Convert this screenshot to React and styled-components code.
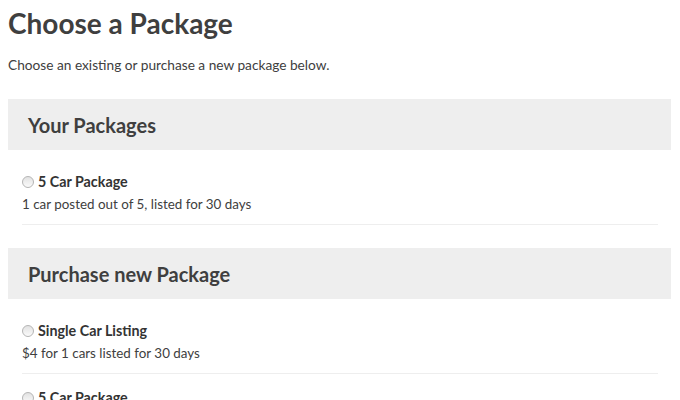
import styled, { createGlobalStyle } from "styled-components";

const GlobalStyle = createGlobalStyle`
  body {
    margin: 8px;
    background: #fff;
    color: #404040;
    font-family: "Lato", "Liberation Sans", sans-serif;
  }
`;

const SECTIONS = [
  {
    title: "Your Packages",
    items: [{ name: "5 Car Package", detail: "1 car posted out of 5, listed for 30 days" }],
  },
  {
    title: "Purchase new Package",
    items: [
      { name: "Single Car Listing", detail: "$4 for 1 cars listed for 30 days" },
      { name: "5 Car Package", detail: "$15 for 5 cars listed for 30 days" },
    ],
  },
];

const App = () => {
  return (
    <Page>
      <GlobalStyle />
      <Title>Choose a Package</Title>
      <Intro>Choose an existing or purchase a new package below.</Intro>
      {SECTIONS.map((section) => (
        <Section key={section.title}>
          <SectionHeader>{section.title}</SectionHeader>
          <List>
            {section.items.map((item) => (
              <Item key={item.name}>
                <Label>
                  <Radio type="radio" name="package" />
                  <Name>{item.name}</Name>
                </Label>
                <Detail>{item.detail}</Detail>
              </Item>
            ))}
          </List>
        </Section>
      ))}
    </Page>
  );
};

const Page = styled.div`
  display: flex;
  flex-direction: column;
`;

const Title = styled.h1`
  margin: 0;
  font-size: 28px;
  line-height: 30px;
  font-weight: 700;
  color: #3f3f3f;
`;

const Intro = styled.p`
  margin: 17px 0 0;
  font-size: 13.7px;
  line-height: 20px;
`;

const Section = styled.section`
  margin-top: 24px;
  & + & {
    margin-top: 23px;
  }
`;

const SectionHeader = styled.h2`
  margin: 0 1px 0 0;
  background: #eeeeee;
  padding: 0 20px;
  height: 51px;
  display: flex;
  align-items: center;
  font-size: 20px;
  font-weight: 700;
  color: #3f3f3f;
`;

const List = styled.div`
  padding: 22px 14px 0;
`;

const Item = styled.div`
  padding-bottom: 10px;
  border-bottom: 1px solid #eeeeee;
  & + & {
    margin-top: 14px;
  }
`;

const Label = styled.label`
  display: flex;
  align-items: center;
  gap: 4px;
  line-height: 20px;
`;

const Radio = styled.input`
  appearance: none;
  margin: 0;
  width: 12px;
  height: 12px;
  border-radius: 50%;
  border: 1px solid #b5b5b5;
  background: linear-gradient(#e2e2e2, #fafafa);
  box-sizing: border-box;
`;

const Name = styled.span`
  font-size: 14.3px;
  font-weight: 700;
  color: #333;
`;

const Detail = styled.div`
  font-size: 13.4px;
  line-height: 20px;
  margin-top: 2px;
`;

export default App;
